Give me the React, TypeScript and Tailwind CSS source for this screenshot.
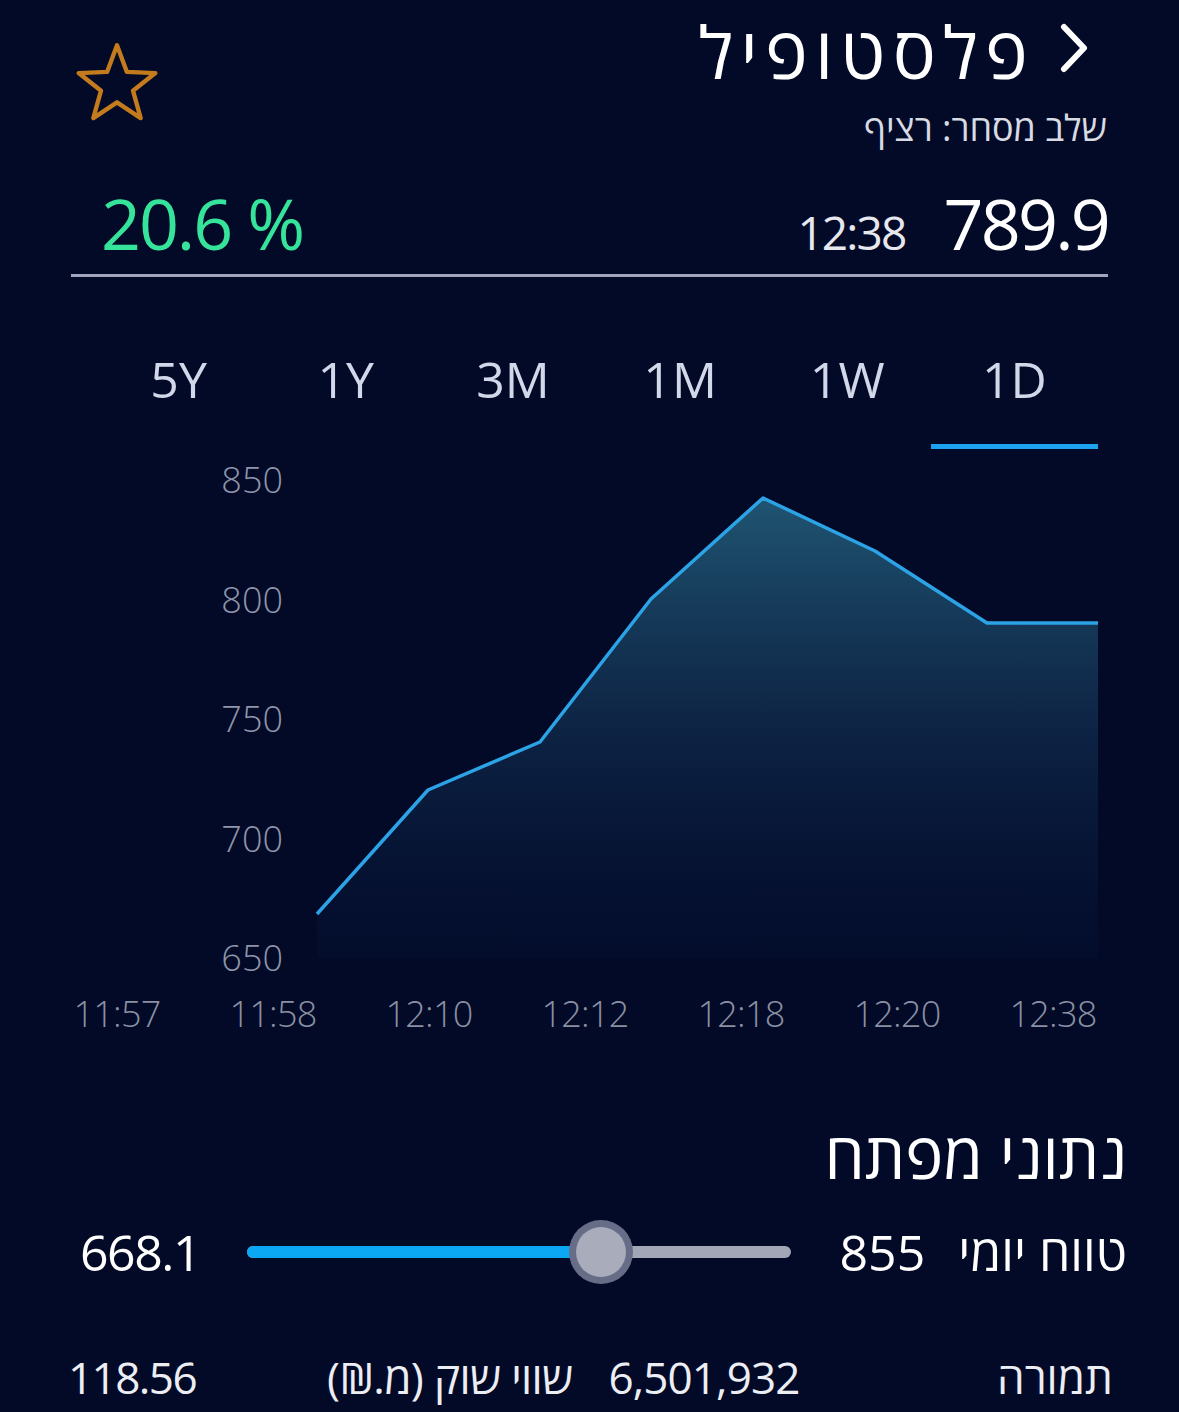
import React from "react";

const tabs = ["5Y", "1Y", "3M", "1M", "1W", "1D"];
const yTicks = ["850", "800", "750", "700", "650"];
const xTicks = ["11:57", "11:58", "12:10", "12:12", "12:18", "12:20", "12:38"];

// chart points, svg coords (svg starts at x=300, y=462)
const pts: [number, number][] = [
  [17, 452],
  [128, 328],
  [240, 280],
  [351, 137],
  [463, 36],
  [575, 89],
  [687, 161],
  [798, 161],
];

function Star() {
  return (
    <svg width="84" height="84" viewBox="0 0 100 100" className="mt-[26px] ml-[3px] shrink-0">
      <polygon
        points="50,5 61.76,36.82 95.65,38.17 69.02,59.18 78.21,91.83 50,73 21.79,91.83 30.98,59.18 4.35,38.17 38.24,36.82"
        fill="none"
        stroke="#c47b1d"
        strokeWidth="5.2"
        strokeLinejoin="round"
      />
    </svg>
  );
}

function Chevron() {
  return (
    <svg width="30" height="52" viewBox="0 0 30 52" className="-mt-[6px] shrink-0">
      <polyline
        points="5,5 25,26 5,47"
        fill="none"
        stroke="white"
        strokeWidth="6"
        strokeLinecap="round"
        strokeLinejoin="round"
      />
    </svg>
  );
}

function Chart() {
  const line = pts.map((p) => p.join(",")).join(" ");
  const area = `${line} 798,496 17,496`;
  return (
    <svg width="800" height="514" viewBox="0 0 800 514" className="shrink-0">
      <defs>
        <linearGradient id="fill" x1="0" y1="0" x2="0" y2="1">
          <stop offset="0%" stopColor="#2b7290" stopOpacity="0.72" />
          <stop offset="45%" stopColor="#1a4063" stopOpacity="0.55" />
          <stop offset="100%" stopColor="#0a1a45" stopOpacity="0.15" />
        </linearGradient>
      </defs>
      <polygon points={area} fill="url(#fill)" />
      <polyline points={line} fill="none" stroke="#2ba3e6" strokeWidth="3.5" strokeLinejoin="round" />
    </svg>
  );
}

export default function App() {
  return (
    <div className="w-[1179px] h-[1412px] overflow-hidden bg-[#020a27] text-white font-['Open_Sans',sans-serif]">
      <header className="flex justify-between px-[72px] pt-[15px]">
        <Star />
        <div className="flex flex-col items-end">
          <div className="flex items-center gap-[24px] pr-[18px]">
            <h1 dir="rtl" className="text-[72px] leading-none font-normal tracking-[0.1em]">
              פלסטופיל
            </h1>
            <Chevron />
          </div>
          <p dir="rtl" className="mt-[23px] text-[36px] leading-none text-[#d8dbe3]">
            שלב מסחר: רציף
          </p>
        </div>
      </header>

      <div className="mx-[71px] mt-[42px] flex items-baseline justify-between border-b-[3px] border-[#a0a5bd] pb-[16px] pl-[30px]">
        <span className="text-[70px] leading-none text-[#36e39a] tracking-[-0.03em]">20.6 %</span>
        <div className="flex items-baseline gap-[38px]">
          <span className="text-[46px] leading-none text-[#e6e8ee] tracking-[-0.04em]">12:38</span>
          <span className="text-[70px] leading-none tracking-[-0.04em]">789.9</span>
        </div>
      </div>

      <div className="ml-[95px] mt-[77px] grid w-[1003px] grid-cols-6">
        {tabs.map((t) => (
          <div key={t} className="flex flex-col items-center">
            <span className="text-[50px] leading-none text-[#d2d8ea]">{t}</span>
            <div className={`mt-[40px] h-[5px] w-full ${t === "1D" ? "bg-[#1ba3ef]" : "bg-transparent"}`} />
          </div>
        ))}
      </div>

      <div className="mt-[13px] flex items-start pl-[213px]">
        <div className="flex w-[70px] flex-col items-end gap-[83.5px]">
          {yTicks.map((y) => (
            <span key={y} className="text-[36px] leading-none text-[#8f95aa] font-light">
              {y}
            </span>
          ))}
        </div>
        <div className="ml-[17px]">
          <Chart />
        </div>
      </div>

      <div className="ml-[39px] mt-[20px] grid w-[1092px] grid-cols-7">
        {xTicks.map((x) => (
          <span key={x} className="text-center text-[36px] leading-none text-[#8a90a4] font-light tracking-[-0.02em]">
            {x}
          </span>
        ))}
      </div>

      <h2 dir="rtl" className="mt-[91px] pl-[52px] pr-[52px] text-right text-[64px] leading-none font-normal">
        נתוני מפתח
      </h2>

      <div className="mt-[33px] flex h-[64px] items-center pl-[80px] pr-[52px]">
        <span className="w-[167px] text-[50px] leading-none tracking-[-0.03em]">668.1</span>
        <div className="relative h-[12px] w-[544px] rounded-full bg-[#a3a6b6]">
          <div className="h-full w-[354px] rounded-l-full bg-[#0ba6f4]" />
          <div className="absolute left-[322px] top-[-26px] flex h-[64px] w-[64px] items-center justify-center rounded-full bg-[#686d87]">
            <div className="h-[50px] w-[50px] rounded-full bg-[#a9acba]" />
          </div>
        </div>
        <div className="ml-auto flex items-center gap-[33px]">
          <span className="text-[50px] leading-none">855</span>
          <span dir="rtl" className="text-[50px] leading-none">
            טווח יומי
          </span>
        </div>
      </div>

      <div className="mt-[61px] grid h-[64px] grid-cols-2 items-center gap-[36px] pl-[68px] pr-[66px] text-[44px] leading-none text-[#eceef3]">
        <div className="flex items-center justify-between">
          <span className="tracking-[-0.035em]">118.56</span>
          <span dir="rtl" className="tracking-[-0.015em]">שווי שוק (מ.₪)</span>
        </div>
        <div className="flex items-center justify-between">
          <span className="tracking-[-0.02em]">6,501,932</span>
          <span dir="rtl">תמורה</span>
        </div>
      </div>
    </div>
  );
}
